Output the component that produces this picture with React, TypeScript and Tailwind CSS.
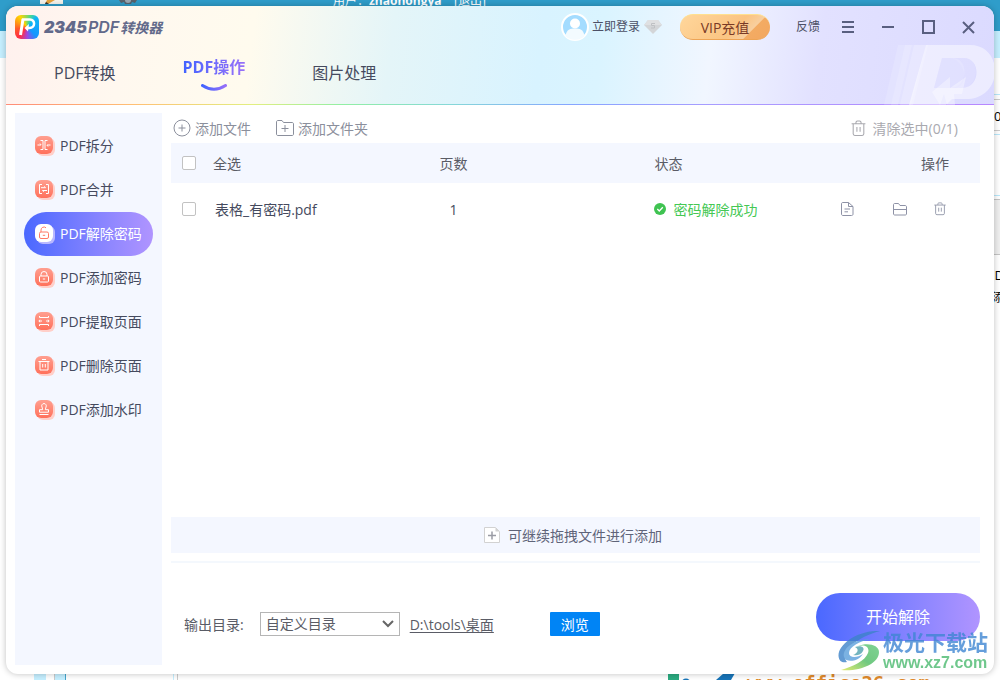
import React, { useState } from 'react'

// Type definition for sidebar tools
interface Tool {
  label: string
  icon: React.ReactNode
}

// 18x18 line glyphs, drawn in the current colour
const tools: Tool[] = [
  {
    label: 'PDF拆分',
    icon: (
      <>
        <path d="M5.500 4.500H8v9H5.500M12.500 4.500H10v9h2.500M2.500 9H6M12 9h3.500" />
        <path d="M5 7.500 6.200 9M13 10.500 11.800 9" />
      </>
    )
  },
  {
    label: 'PDF合并',
    icon: (
      <>
        <path d="M7 4.500H4.500v9H7M11 4.500h2.500v9H11M6 7.700h4.500M12 10.500H7.500" />
        <path d="M9.200 6.400 10.600 7.700M8.800 11.800 7.400 10.500" />
      </>
    )
  },
  {
    label: 'PDF解除密码',
    icon: (
      <>
        <rect x="4.500" y="8" width="9" height="6.500" rx="1.500" />
        <path d="M6 8V6a3 3 0 0 1 5-2.200M7.800 11.300h2.400" />
      </>
    )
  },
  {
    label: 'PDF添加密码',
    icon: (
      <>
        <rect x="4.500" y="8" width="9" height="6" rx="1" />
        <path d="M6 8V6.500a3 3 0 0 1 6 0V8M7.800 11h2.400" />
      </>
    )
  },
  {
    label: 'PDF提取页面',
    icon: (
      <>
        <path d="M4.500 4v1.500h9V4M4.500 14v-1.500h9V14M4 9h3M11 9h3" />
        <path d="M5.200 7.700 3.800 9l1.400 1.300M12.800 7.700 14.200 9l-1.400 1.300" />
      </>
    )
  },
  {
    label: 'PDF删除页面',
    icon: <path d="M3.500 5.500h11M7 3.500h4M5 5.500v8.500h8V5.500M7.700 8v3.500M10.300 8v3.500" />
  },
  {
    label: 'PDF添加水印',
    icon: (
      <path d="M4.500 14.500h9M4.500 12.200V9.700h3.200L7 7a2.300 2.300 0 1 1 4 0l-.7 2.700h3.200v2.500z" />
    )
  }
]

const tabs = ['PDF转换', 'PDF操作', '图片处理']

const checkboxClass =
  'block size-[14px] appearance-none rounded-[2px] border border-[#c2c2c2] bg-white checked:bg-[#4c6bff]'

const TrashIcon = ({ className }: { className: string }) => (
  <svg viewBox="0 0 16 16" className={className} fill="none" stroke="currentColor">
    <path d="M1.500 3.500h13M5.500 3.300c0-2 .5-2.300 1.500-2.300h2c1 0 1.500.3 1.500 2.300M3 3.500v9.500c0 1 .5 1.500 1.500 1.500h7c1 0 1.500-.5 1.500-1.500V3.500M6.500 6.500V11M9.500 6.500V11" />
  </svg>
)

// The page that shows round the edges of the window
const Desktop = () => (
  <div className="absolute inset-0 overflow-hidden bg-white" aria-hidden="true">
    <div className="h-[31px] bg-[#2f9dca]" />
    <div className="h-[27px] bg-[#c5efff]" />
    <svg className="absolute left-10 top-0" width="24" height="4">
      <path d="M0 0h23v4H0z" fill="#f4f1ea" />
      <path d="m5 4 2-4h8l-7 4z" fill="#e5a13b" />
      <path d="m5 4 1-2 3 2z" fill="#333" />
    </svg>
    <svg className="absolute left-[119px] top-0" width="19" height="4">
      <path d="M0 0h18l-2 3-3-1-1 2H6L5 2 2 3z" fill="#57626d" />
      <circle cx="9" cy="0" r="3" fill="#9ba7b2" />
    </svg>
    <p className="absolute left-[333px] -top-[6px] flex text-[12px] leading-[14px] whitespace-pre text-white">
      用户：<b>zhaohongya</b>{'    [退出]'}
    </p>
    <div className="absolute right-0 top-[94px] h-px w-2 bg-[#b9e8fb]" />
    <div className="absolute right-0 top-[99px] h-px w-2 bg-[#ccc]" />
    <div className="absolute -right-[9px] top-[108px] text-[13px] leading-[16px] text-black">-01</div>
    <div className="absolute right-0 top-[130px] h-px w-2 bg-[#ccc]" />
    <div className="absolute right-0 top-[134px] h-px w-2 bg-[#b9e8fb]" />
    <div className="absolute right-0 top-[195px] h-px w-2 bg-[#b9e8fb]" />
    <div className="absolute right-0 top-[199px] h-14 w-2 border-y border-[#c4c4c4] bg-[#efefef]" />
    <div className="absolute -right-1 top-[267px] text-[13px] leading-[16px] text-black">D</div>
    <div className="absolute -right-1 top-[290px] text-[12px] leading-[16px] text-black">添</div>
    <div className="absolute bottom-0 left-[34px] h-2 w-3 bg-[#c5efff]" />
    <div className="absolute bottom-0 left-[54px] h-2 w-3 border-l border-r border-l-[#ccc] border-r-[#45a5cc] bg-[#c5efff]" />
    <div className="absolute bottom-0 left-[173px] h-2 w-[5px] border-l border-r border-l-[#c5efff] border-r-[#ccc]" />
    <div className="absolute bottom-0 left-[668px] h-2 w-[11px] bg-[#2bab80]" />
    <svg className="absolute bottom-0 left-[682px]" width="54" height="7">
      <circle cx="4" cy="10" r="4.500" fill="#1774b8" />
      <path d="M42 0h11l-4 7H34z" fill="#1774b8" />
    </svg>
    <p className="absolute left-[747px] top-[672px] font-['DejaVu_Sans_Mono',monospace] text-[19px] leading-[22px] font-bold text-[#e08a2c]">
      www.office26.com
    </p>
  </div>
)

const Logo = () => (
  <div className="flex items-center gap-[5px]">
    <span className="size-6 overflow-hidden rounded-md bg-[conic-gradient(from_45deg,#0fb6f5,#1696ff_25%,#a045e0_37%,#ff2f45_48%,#ff5a2a_60%,#ffd500_78%,#4fd98a_92%,#0fb6f5)]">
      <svg viewBox="0 0 24 24" fill="none" stroke="#fff" strokeWidth="2.500">
        <path d="M8 4 5.500 20" strokeWidth="3" />
        <path d="M7 4.500h8c5.500 0 5.500 8.500-.5 8.500H13" />
        <path d="m14 9-4.500 4 3.500 3.500z" fill="#fff" stroke="none" />
      </svg>
    </span>
    <h1 className="flex items-center font-bold text-[#62698a] italic">
      <span className="font-['Inter',sans-serif] text-[16px] font-black">2345</span>
      <span className="ml-px font-['Inter',sans-serif] text-[16px] font-semibold">PDF</span>
      <span className="ml-px text-[14px]">转换器</span>
    </h1>
  </div>
)

const Header = () => (
  <header className="relative bg-[linear-gradient(97deg,#fff1ee_0%,#fff8ef_12%,#fffbee_25%,#e4f5f8_39%,#d8f3ff_54%,#daf4ff_60%,#f1f6ff_71%,#e2e1ff_82%,#dbdaff_100%)]">
    {/* Faded brand letter in the corner */}
    <svg className="absolute right-0 bottom-0" width="110" height="60" viewBox="0 0 110 60" fill="#fff">
      <path d="M14 0h14L14 60H0z" opacity=".15" />
      <path d="M21 0h21L27 60H7z" opacity=".15" />
      <path d="M30 0h14L29 60H16z" opacity=".2" />
      <path
        d="M42 0h44c34 0 34 54-4 54H68l-6 6H25zM58 13 50 43h28c19 0 19-30 2-30z"
        fillRule="evenodd"
        opacity=".48"
      />
      <path d="M58 13h10c18 0 16 30-2 30H50z" opacity=".14" />
      <path d="M66 13h14c17 0 15 30-2 30h-8c16 0 12-28-4-30z" opacity=".1" />
      <path d="M66 32 48 47l8 13 4-11 3 11h8l-1-11h8l4-17-16 11z" opacity=".35" />
    </svg>

    <div className="relative flex h-[42px] items-center justify-between pr-[19px] pl-[9px]">
      <Logo />
      <div className="flex items-center text-[12px] text-[#4c5066]">
        <button className="flex items-center gap-[3px]">
          <svg viewBox="0 0 28 28" className="size-7">
            <circle cx="14" cy="14" r="13" fill="#a4dcff" stroke="#fff" strokeWidth="2" />
            <circle cx="14" cy="10.500" r="5" fill="#fff" />
            <path d="M4.500 23c1-7 5-7.500 9.500-7.500s8.500.5 9.500 7.500c-5 5-14 5-19 0z" fill="#f3fbff" />
          </svg>
          <span>立即登录</span>
          <svg viewBox="0 0 18 14" className="ml-px h-[14px] w-[18px]">
            <path d="M4 0h10l4 5-9 9-9-9z" fill="#d3d5d8" />
            <path d="M4 0h10l4 5H0z" fill="#dfe0e2" />
            <path d="M11 3.500H7.500v2h3v2.500H7" fill="none" stroke="#bfc1c4" />
          </svg>
        </button>
        <button className="ml-[18px] h-[26px] w-[90px] rounded-full border-t border-b border-t-[#ffe08f] border-b-[#eda455] bg-[linear-gradient(135deg,#ffd79c_0%,#fbc482_60%,#f8cf9f_76%,#f3ab63_77%,#f3a75f_100%)] text-[14px] text-[#7a3a26]">
          VIP充值
        </button>
        <button className="ml-[26px]">反馈</button>
        <div className="ml-[22px] flex items-center gap-[27px] text-[#595f80]">
          <button aria-label="菜单">
            <svg className="size-[13px]" viewBox="0 0 13 13" stroke="currentColor" strokeWidth="2">
              <path d="M0 1h12M0 6h12M0 11h12" />
            </svg>
          </button>
          <button aria-label="最小化">
            <svg className="size-[13px]" viewBox="0 0 13 13" stroke="currentColor" strokeWidth="2">
              <path d="M0 6h12" />
            </svg>
          </button>
          <button aria-label="最大化">
            <svg className="h-[14px] w-[13px]" viewBox="0 0 13 14" fill="none" stroke="currentColor" strokeWidth="2">
              <path d="M1 1h11v12H1z" />
            </svg>
          </button>
          <button aria-label="关闭">
            <svg className="size-[13px]" viewBox="0 0 13 13" stroke="currentColor" strokeWidth="2">
              <path d="m1 1 11 11M12 1 1 12" />
            </svg>
          </button>
        </div>
      </div>
    </div>

    <nav className="relative mb-[6px] flex h-[50px] items-center gap-[67px] pl-12 text-[16px] leading-6">
      {tabs.map((tab, index) =>
        index === 1 ? (
          <a key={tab} href="#" className="flex flex-col items-center gap-[5px] font-bold">
            <span className="bg-linear-to-r from-[#4163ff] to-[#9770f8] bg-clip-text text-transparent">{tab}</span>
            <svg className="h-[7px] w-[26px]" viewBox="0 0 26 7" fill="none">
              <defs>
                <linearGradient id="smile" x1="0" x2="1">
                  <stop stopColor="#4163ff" />
                  <stop offset="1" stopColor="#9770f8" />
                </linearGradient>
              </defs>
              <path d="M1.500 1.500q11.500 7.500 23 0" stroke="url(#smile)" strokeWidth="3" strokeLinecap="round" />
            </svg>
          </a>
        ) : (
          <a key={tab} href="#" className="text-[#454a5e]">
            {tab}
          </a>
        )
      )}
    </nav>
    <div className="h-px bg-[linear-gradient(90deg,#ff8c78,#ffc074_13%,#e2ef80_25%,#92efa4_34%,#86d8d8_45%,#86a6ff_57%,#a99cff_72%,#b787ff)]" />
  </header>
)

const Sidebar = () => {
  const [active, setActive] = useState('PDF解除密码')

  return (
    <aside className="w-[147px] shrink-0 bg-[#f4f7ff] px-[9px] pt-[11px]">
      {tools.map((tool) => {
        const selected = tool.label === active
        return (
          <button
            key={tool.label}
            onClick={() => setActive(tool.label)}
            className={`flex h-11 w-full items-center gap-[7px] rounded-full pb-[2px] pl-[11px] text-[14px] ${
              selected ? 'bg-linear-to-r from-[#4a68ff] to-[#b094ff] text-white' : 'text-[#454a5e]'
            }`}
          >
            <span
              className={`size-[18px] shrink-0 rounded-[6px] ${
                selected
                  ? 'bg-white text-[#ff7a66] shadow-[2px_2px_0_#b9b8ff]'
                  : 'bg-linear-to-b from-[#ff9f90] to-[#ff705b] text-white shadow-[2px_2px_0_#ffcfc9]'
              }`}
            >
              <svg viewBox="0 0 18 18" fill="none" stroke="currentColor">
                {tool.icon}
              </svg>
            </span>
            <span className="whitespace-nowrap">{tool.label}</span>
          </button>
        )
      })}
    </aside>
  )
}

const FileTable = () => (
  <table className="w-full table-fixed text-left text-[14px]">
    <thead className="bg-[#f4f7ff] text-[#5a5c66]">
      <tr className="h-10">
        <th className="w-[42px] pl-[11px]">
          <input type="checkbox" id="all" className={checkboxClass} />
        </th>
        <th className="w-[28%] font-normal">
          <label htmlFor="all">全选</label>
        </th>
        <th className="w-[214px] font-normal">页数</th>
        <th className="pl-px font-normal">状态</th>
        <th className="w-[150px] pr-[31px] text-right font-normal">操作</th>
      </tr>
    </thead>
    <tbody className="text-[#454a5e]">
      <tr className="h-[52px]">
        <td className="pl-[11px]">
          <input type="checkbox" id="file" className={checkboxClass} />
        </td>
        <td className="pl-[2px]">
          <label htmlFor="file">表格_有密码.pdf</label>
        </td>
        <td>
          <span className="block w-7 text-center">1</span>
        </td>
        <td className="text-[#45c854]">
          <span className="flex items-center gap-2">
            <svg viewBox="0 0 12 12" className="size-3">
              <circle cx="6" cy="6" r="6" fill="#3fc351" />
              <path d="m3.300 6 2 2 3.500-3.700" fill="none" stroke="#fff" strokeWidth="1.300" />
            </svg>
            密码解除成功
          </span>
        </td>
        <td className="pr-[33px]">
          <div className="flex items-center justify-end gap-[26px] text-[#8e92a6]">
            <button aria-label="打开文件" className="mr-[13px]">
              <svg viewBox="0 0 14 14" className="size-[14px]" fill="none" stroke="currentColor">
                <path d="M8.500.5H3C1.800.5 1.500 1 1.500 2v10c0 1 .5 1.500 1.500 1.500h8.500c1 0 1.500-.5 1.500-1.500V4.500zM8.500.5v4H13M4.500 7H10M4.500 9.800h3.500" />
              </svg>
            </button>
            <button aria-label="打开文件夹">
              <svg viewBox="0 0 14 14" className="size-[14px]" fill="none" stroke="currentColor">
                <path d="M.5 12V2.800c0-1 .5-1.300 1.300-1.300h3.700l1.500 2h5c1 0 1.500.5 1.500 1.500v7c0 .5-.5 1-1 1h-11c-.5 0-1-.5-1-1zM.5 7.500h13" />
              </svg>
            </button>
            <button aria-label="删除">
              <TrashIcon className="size-[14px]" />
            </button>
          </div>
        </td>
      </tr>
    </tbody>
  </table>
)

const Footer = () => (
  <footer className="mt-2 flex items-start justify-between border-t-2 border-[#f4f8fd] pt-[30px] pb-[33px] pl-[13px]">
    <div className="mt-[19px] flex h-6 items-center text-[14px] text-[#5a5c66]">
      <label htmlFor="output">输出目录:</label>
      <div className="relative ml-4 h-full w-[140px]">
        <select id="output" className="h-full w-full appearance-none border border-[#b5b5b5] bg-white pl-[5px] leading-[20px]">
          <option>自定义目录</option>
        </select>
        <svg viewBox="0 0 12 8" className="pointer-events-none absolute top-2 right-[6px] h-2 w-3" fill="none" stroke="#666" strokeWidth="2">
          <path d="m1 1 5 5 5-5" />
        </svg>
      </div>
      <a href="#" className="ml-[10px] underline underline-offset-2">
        D:\tools\桌面
      </a>
      <button className="ml-14 h-full w-[50px] rounded-[1px] bg-[#0084f5] text-white">浏览</button>
    </div>
    <button className="h-12 w-[164px] rounded-full bg-linear-to-r from-[#4a68ff] to-[#b094ff] text-[16px] text-white">
      开始解除
    </button>
  </footer>
)

// Site stamp in the corner of the window
const SiteStamp = () => (
  <div className="pointer-events-none absolute right-[6px] bottom-[2px] flex items-center gap-[3px] font-bold opacity-80">
    <svg viewBox="0 0 42 40" className="h-10 w-[42px]">
      <defs>
        <linearGradient id="leaf" x1="0" y1="1" x2="1" y2="0">
          <stop stopColor="#dce84c" />
          <stop offset=".5" stopColor="#4dbb62" />
          <stop offset="1" stopColor="#5fc87a" />
        </linearGradient>
      </defs>
      <path d="M42 0C20-1 0 13 .5 25 1 31 5 32 9 31 3 25 12 8 42 0z" fill="#3d83c8" />
      <path d="M32 8C17 8 4 17 6 26c2 6 14 5 19-3-6 4-14 4-14-1 0-6 11-12 21-14z" fill="#5b9fdb" />
      <path d="M20 15c7-2 12 1 10 7-3 8-14 13-27 17 18 2 38-6 38-18 0-7-11-10-21-6z" fill="url(#leaf)" />
      <path d="M17 16c7-2 10 1 8 4-2 4-6 5-10 4 4-1 7-6 2-8z" fill="#4fa2ae" />
    </svg>
    <div>
      <p className="text-[21px] leading-[24px] text-[#3f86d3]">极光下载站</p>
      <p className="font-['Liberation_Sans',sans-serif] text-[16px] leading-[18px] text-[#4cba70]">www.xz7.com</p>
    </div>
  </div>
)

const App = () => {
  return (
    <div className="relative flex min-h-screen p-[6px] font-['Open_Sans','Noto_Sans_CJK_SC',sans-serif]">
      <Desktop />
      <div className="relative flex flex-1 flex-col overflow-hidden rounded-xl bg-white shadow-[0_0_6px_rgba(0,0,0,0.25)]">
        <Header />
        <div className="flex flex-1">
          <div className="flex pt-2 pb-[9px] pl-[9px]">
            <Sidebar />
          </div>
          <main className="flex flex-1 flex-col pt-2 pr-[14px] pl-[9px]">
            <div className="flex h-[30px] items-center text-[14px] text-[#8b8f9c]">
              <button className="flex items-center gap-1 pl-[2px]">
                <svg viewBox="0 0 18 18" className="size-[18px]" fill="none" stroke="currentColor">
                  <circle cx="9" cy="9" r="8" />
                  <path d="M9 5.500v7M5.500 9h7" />
                </svg>
                添加文件
              </button>
              <button className="ml-[25px] flex items-center gap-1">
                <svg viewBox="0 0 18 18" className="size-[18px]" fill="none" stroke="currentColor">
                  <path d="M.5 15V3c0-1 .5-1.500 1.500-1.500h4l1.500 2h8.500c1 0 1.500.5 1.500 1.500v10c0 1-.5 1.500-1.500 1.500H2c-1 0-1.500-.5-1.500-1.500zM9 6v7M5.500 9.500h7" />
                </svg>
                添加文件夹
              </button>
              <button className="mr-[22px] ml-auto flex items-center gap-[6px] text-[#a9a9af]">
                <TrashIcon className="size-[17px]" />
                清除选中(0/1)
              </button>
            </div>
            <div className="flex-1">
              <FileTable />
            </div>
            <button className="flex h-9 items-center justify-center gap-2 bg-[#f4f7ff] pr-[5px] text-[14px] text-[#5f6479]">
              <svg viewBox="0 0 16 16" className="size-4" fill="none">
                <path d="M.5.500h11l4 4v11H.5z" fill="#fff" stroke="#d2d2d2" />
                <path d="M11.500.5v4h4z" fill="#d2d2d2" />
                <path d="M8 4.500v8M4 8.500h8" stroke="#9a9ca5" strokeWidth="1.500" />
              </svg>
              可继续拖拽文件进行添加
            </button>
            <Footer />
          </main>
        </div>
        <SiteStamp />
      </div>
    </div>
  )
}

export default App
